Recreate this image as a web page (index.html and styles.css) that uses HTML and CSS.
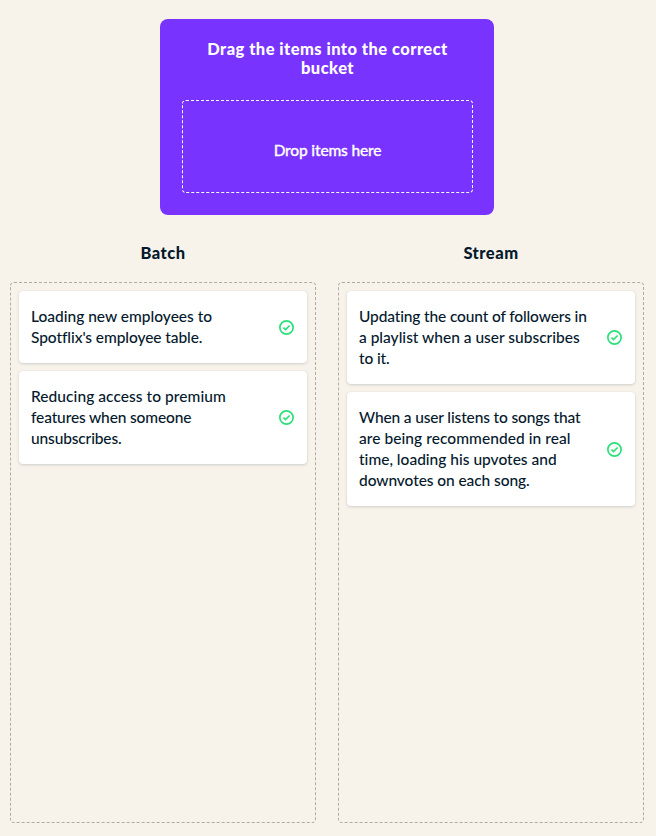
FILE: index.html
```html
<!DOCTYPE html>
<html lang="en">
<head>
<meta charset="utf-8">
<title>Drag and drop exercise</title>
<link rel="stylesheet" href="styles.css">
</head>
<body>
<svg class="defs" width="0" height="0" aria-hidden="true">
  <symbol id="check" viewBox="0 0 16 16">
    <circle cx="8" cy="8" r="7.1" fill="none" stroke="currentColor" stroke-width="1.8"/>
    <path d="M4.7 8.1 7.1 10.3 11.3 5.9" fill="none" stroke="currentColor" stroke-width="1.8"/>
  </symbol>
</svg>
<main class="exercise">
  <section class="source">
    <h1 class="source-title">Drag the items into the correct<br>bucket</h1>
    <div class="source-drop">Drop items here</div>
  </section>
  <div class="buckets">
    <section class="bucket">
      <h2 class="bucket-title">Batch</h2>
      <div class="bucket-drop">
        <article class="card">
          <p class="card-text">Loading new employees to<br><span class="snug">Spotflix's employee table.</span></p>
          <svg class="icon"><use href="#check"/></svg>
        </article>
        <article class="card">
          <p class="card-text"><span class="loose">Reducing access to premium</span><br><span class="tight">features when someone</span><br><span class="tight">unsubscribes.</span></p>
          <svg class="icon"><use href="#check"/></svg>
        </article>
      </div>
    </section>
    <section class="bucket">
      <h2 class="bucket-title">Stream</h2>
      <div class="bucket-drop">
        <article class="card">
          <p class="card-text"><span class="tight">Updating the count of followers in</span><br>a playlist when a user subscribes<br><span class="tight">to it.</span></p>
          <svg class="icon"><use href="#check"/></svg>
        </article>
        <article class="card">
          <p class="card-text"><span class="tight">When a user listens to songs that</span><br><span class="loose">are being recommended in real</span><br>time, loading his upvotes and<br><span class="snug">downvotes on each song.</span></p>
          <svg class="icon"><use href="#check"/></svg>
        </article>
      </div>
    </section>
  </div>
</main>
</body>
</html>
```
FILE: styles.css
```css
* { box-sizing: border-box; }
body {
  margin: 0;
  background: #f7f3eb;
  color: #05192d;
  font: 500 15.5px/21px Lato, "Liberation Sans", sans-serif;
  font-variant-ligatures: none;
}
.defs { display: block; }
h1, h2, p { margin: 0; }
.exercise {
  height: 836px;
  padding: 19px 12px 13px 10px;
  display: flex;
  flex-direction: column;
}
.source {
  width: 334px;
  height: 196px;
  margin-left: 150px;
  padding: 21px 21px 22px 22px;
  border-radius: 8px;
  background: #7933ff;
  color: #fff;
  text-align: center;
  display: flex;
  flex-direction: column;
}
.source-title {
  height: 60px;
  font-size: 16.5px;
  font-weight: 900;
  line-height: 19px;
  letter-spacing: .45px;
}
.source-drop {
  flex: 1;
  border: 1px dashed #fff;
  border-radius: 4px;
  display: flex;
  align-items: center;
  justify-content: center;
  padding-top: 8px;
  letter-spacing: -.15px;
  -webkit-text-stroke: .3px #fff;
}
.buckets { flex: 1; margin-top: 28px; display: flex; gap: 22px; }
.bucket { flex: 1; display: flex; flex-direction: column; }
.bucket-title {
  height: 39px;
  font-size: 16.5px;
  font-weight: 900;
  line-height: 21px;
  letter-spacing: .5px;
  text-align: center;
}
.bucket-drop {
  flex: 1;
  padding: 8px;
  border: 1px dashed #b0aba3;
  border-radius: 4px;
  display: flex;
  flex-direction: column;
  gap: 8px;
}
.card {
  display: flex;
  align-items: center;
  justify-content: space-between;
  padding: 15px 13px 15px 12px;
  border-radius: 4px;
  background: #fff;
  box-shadow: 0 0 1px rgba(5, 25, 45, .08), 0 1px 3px rgba(5, 25, 45, .16);
}
.card-text { white-space: nowrap; }
.loose { letter-spacing: .06px; }
.snug { letter-spacing: -.08px; }
.tight { letter-spacing: -.14px; }
.icon { width: 15px; height: 15px; flex: none; color: #2be079; }
```
